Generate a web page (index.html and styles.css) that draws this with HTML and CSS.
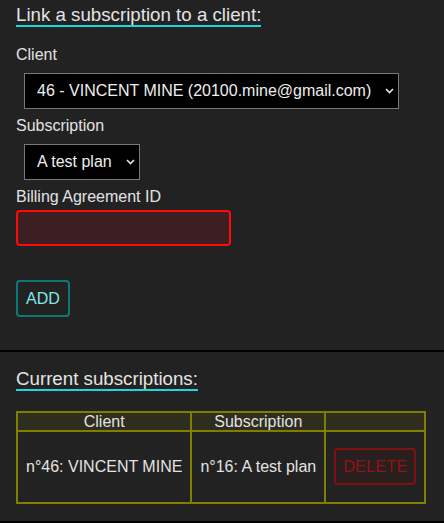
FILE: index.html
```html
<!DOCTYPE html>
<html lang="en">
<head>
<meta charset="utf-8">
<title>Subscriptions</title>
<link rel="stylesheet" href="styles.css">
</head>
<body>
<section class="panel">
  <h3 class="title">Link a subscription to a client:</h3>
  <form class="form">
    <label class="label" for="client">Client</label>
    <div class="select-wrap">
      <select id="client" class="select">
        <option>46 - VINCENT MINE (20100.mine@gmail.com)</option>
      </select>
      <svg class="chevron" width="9" height="6" viewBox="0 0 9 6"><path d="M1 1l3.5 3.5L8 1" fill="none" stroke="#e6e6e6" stroke-width="1.6"/></svg>
    </div>
    <label class="label" for="plan">Subscription</label>
    <div class="select-wrap">
      <select id="plan" class="select">
        <option>A test plan</option>
      </select>
      <svg class="chevron" width="9" height="6" viewBox="0 0 9 6"><path d="M1 1l3.5 3.5L8 1" fill="none" stroke="#e6e6e6" stroke-width="1.6"/></svg>
    </div>
    <label class="label" for="billing">Billing Agreement ID</label>
    <input id="billing" class="input" type="text">
    <button type="button" class="btn-add">ADD</button>
  </form>
</section>
<section class="panel panel-list">
  <h3 class="title">Current subscriptions:</h3>
  <table class="table">
    <thead>
      <tr><th>Client</th><th>Subscription</th><th></th></tr>
    </thead>
    <tbody>
      <tr>
        <td>n°46: VINCENT MINE</td>
        <td>n°16: A test plan</td>
        <td><button type="button" class="btn-delete">DELETE</button></td>
      </tr>
    </tbody>
  </table>
</section>
</body>
</html>
```

FILE: styles.css
```css
html, body {
  margin: 0;
  padding: 0;
  background: #222222;
}
body {
  font-family: "Liberation Sans", Arial, sans-serif;
  font-size: 16px;
  color: #e2e2e2;
  height: 523px;
  overflow: hidden;
}
.panel {
  padding: 6px 16px 0;
  height: 344px;
  border-bottom: 2px solid #000;
}
.panel-list {
  height: 151px;
  padding-top: 18px;
}
.title {
  display: block;
  width: fit-content;
  margin: 0;
  font-size: 18.72px;
  font-weight: normal;
  line-height: 1;
  color: #e4e4e4;
  border-bottom: 2px solid #1ad8dc;
}
.form {
  display: flex;
  flex-direction: column;
  align-items: flex-start;
  margin-top: 19px;
}
.label {
  display: block;
  line-height: 18px;
}
.select-wrap {
  position: relative;
  margin: 9px 0 8px 8px;
}
.select {
  appearance: none;
  -webkit-appearance: none;
  display: block;
  height: 36px;
  margin: 0;
  padding: 0 26px 0 12px;
  background: #000;
  color: #eeeeee;
  border: 1px solid #777;
  border-radius: 0;
  font-family: inherit;
  font-size: 16px;
}
.chevron {
  position: absolute;
  right: 5px;
  top: 15px;
  pointer-events: none;
}
.input {
  width: 215px;
  height: 36px;
  box-sizing: border-box;
  margin: 4px 0 0;
  background: #3d1f21;
  border: 2px solid #ff0a0a;
  border-radius: 4px;
  color: #eee;
  font-family: inherit;
  font-size: 16px;
}
.btn-add {
  margin-top: 34px;
  padding: 8px 8px;
  line-height: 17px;
  background: transparent;
  color: #7fe9ea;
  border: 2px solid #0c7878;
  border-radius: 4px;
  font-family: inherit;
  font-size: 16px;
}
.table {
  margin-top: 20px;
  border-collapse: collapse;
  border: 2px solid #7f7f00;
  text-align: center;
}
.table th,
.table td {
  border: 2px solid #7f7f00;
  padding: 0 8px;
}
.table th {
  background: #2e2d20;
  font-weight: normal;
  line-height: 17px;
  color: #e2e2e2;
}
.table td {
  height: 72px;
  box-sizing: border-box;
}
.btn-delete {
  padding: 8px 7px;
  line-height: 17px;
  background: #2a1f1f;
  color: #8c1515;
  border: 2px solid #7e1212;
  border-radius: 4px;
  font-family: inherit;
  font-size: 16.5px;
}
```
